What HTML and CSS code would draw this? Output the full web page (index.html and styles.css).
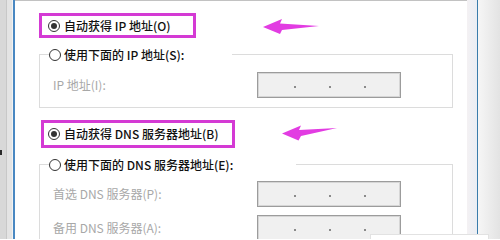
FILE: index.html
```html
<!DOCTYPE html>
<html lang="zh-CN">
<head>
<meta charset="utf-8">
<title>IP 设置</title>
<link rel="stylesheet" href="styles.css">
</head>
<body>
<div class="screen">
  <div class="edge-left"><span class="mark"></span></div>
  <div class="frame-line line-left"></div>
  <div class="window">
    <div class="annot-row row-ip">
      <div class="hl hl-ip"><span class="radio checked"></span><span class="txt">自动获得 IP 地址(O)</span></div>
      <svg class="arrow arrow-ip" width="56" height="16" viewBox="0 0 56 16"><path d="M0 9 L19 1 L17 5.5 L56 8 L19 12 L17 16 Z"/></svg>
    </div>
    <div class="group group-ip">
      <div class="group-title title-ip"><span class="radio"></span><span class="txt">使用下面的 IP 地址(S):</span></div>
      <div class="field"><span class="label">IP 地址(I):</span><span class="ipbox"><i></i><i></i><i></i></span></div>
    </div>
    <div class="annot-row row-dns">
      <div class="hl hl-dns"><span class="radio checked"></span><span class="txt">自动获得 DNS 服务器地址(B)</span></div>
      <svg class="arrow arrow-dns" width="55" height="16" viewBox="0 0 55 16"><path d="M0 8.5 L19 0.5 L17 5 L55 3 L19 11 L16.5 15.5 Z"/></svg>
    </div>
    <div class="group group-dns">
      <div class="group-title title-dns"><span class="radio"></span><span class="txt">使用下面的 DNS 服务器地址(E):</span></div>
      <div class="field"><span class="label">首选 DNS 服务器(P):</span><span class="ipbox"><i></i><i></i><i></i></span></div>
      <div class="field"><span class="label">备用 DNS 服务器(A):</span><span class="ipbox"><i></i><i></i><i></i></span></div>
    </div>
  </div>
  <div class="frame-right"></div>
  <div class="frame-line line-right"></div>
  <div class="shadow"></div>
</div>
<div class="popup"></div>
</body>
</html>
```
FILE: styles.css
```css
html, body {
  margin: 0;
  padding: 0;
  width: 500px;
  height: 239px;
  overflow: hidden;
  background: #fff;
}
body {
  position: relative;
  font-family: "Noto Sans CJK SC", "Noto Sans", sans-serif;
  font-size: 12px;
  font-weight: 500;
  line-height: 16px;
  color: #111;
}
.screen {
  display: flex;
  height: 239px;
}
.edge-left {
  width: 13px;
  flex: none;
  display: flex;
  flex-direction: column;
  background: linear-gradient(to right, #d8d8d8 0 6px, #c8c8c8 6px 7px, #e4e4e4 7px 12px, #f2f2f2 12px 13px);
}
.mark {
  margin-top: 150px;
  width: 2px;
  height: 5px;
  background: #2a2a2a;
}
.frame-line {
  flex: none;
  width: 2px;
}
.line-left {
  background: #4a88c2;
}
.line-right {
  width: 1px;
  background: #3a7cab;
}
.window {
  width: 452px;
  flex: none;
  box-sizing: border-box;
  border-top: 1px solid #c2c2c2;
  padding: 12px 0 0 24px;
  background: #fff;
  display: flex;
  flex-direction: column;
  overflow: hidden;
}
.frame-right {
  width: 10px;
  flex: none;
  background: linear-gradient(to right, #f4f1f3, #eaeef4);
}
.shadow {
  flex: 1;
  background: linear-gradient(to right, #f6f6f6, #e3e3e3);
}
.annot-row {
  display: flex;
  align-items: center;
  flex: none;
}
.row-dns {
  margin-top: 12px;
}
.hl {
  box-sizing: border-box;
  border: 3px solid #d43ad4;
  display: flex;
  align-items: center;
}
.hl-ip {
  width: 157px;
  height: 25px;
  padding-left: 6px;
}
.hl-dns {
  margin-left: 2px;
  width: 194px;
  height: 28px;
  padding-left: 4px;
}
.hl .txt {
  margin-left: 4px;
}
.arrow {
  flex: none;
  fill: #e23ce2;
}
.arrow-ip {
  margin-left: 67px;
}
.arrow-dns {
  margin-left: 47px;
  margin-top: -2px;
}
.radio {
  width: 12px;
  height: 12px;
  box-sizing: border-box;
  border: 1px solid #333;
  border-radius: 50%;
  background: #fff;
  display: inline-flex;
  align-items: center;
  justify-content: center;
  flex: none;
}
.radio.checked::after {
  content: "";
  width: 6px;
  height: 6px;
  border-radius: 50%;
  background: #333;
}
.txt {
  white-space: nowrap;
}
.group {
  box-sizing: border-box;
  width: 414px;
  border: 1px solid #dcdcdc;
  flex: none;
  display: flex;
  flex-direction: column;
}
.group-ip {
  margin-top: 16px;
}
.group-dns {
  margin-top: 16px;
  flex: 1 0 auto;
}
.group-title {
  display: flex;
  align-items: center;
  height: 16px;
  margin: -8px 0 0 9px;
  background: #fff;
}
.title-ip {
  width: 183px;
}
.title-dns {
  width: 247px;
}
.group-title .txt {
  margin-left: 3px;
}
.field {
  display: flex;
  align-items: center;
  padding-left: 13px;
  margin-top: 8px;
}
.group-ip .field {
  margin-top: 9px;
  margin-bottom: 9px;
}
.label {
  width: 204px;
  flex: none;
  color: #a8a8a8;
  font-weight: 400;
  white-space: nowrap;
}
.ipbox {
  box-sizing: border-box;
  width: 144px;
  height: 26px;
  border: 1px solid #9c9c9c;
  box-shadow: inset 0 0 0 1px #d6d6d6;
  background: #f0f0f0;
  display: flex;
  align-items: center;
  padding-left: 36px;
  gap: 33px;
  flex: none;
}
.ipbox i {
  width: 2px;
  height: 2px;
  background: #8a8a8a;
  margin-top: 3px;
}
.popup {
  position: absolute;
  left: 370px;
  top: 234px;
  width: 119px;
  height: 10px;
  box-sizing: border-box;
  background: #fff;
  border: 1px solid #e2e2e2;
}
```
